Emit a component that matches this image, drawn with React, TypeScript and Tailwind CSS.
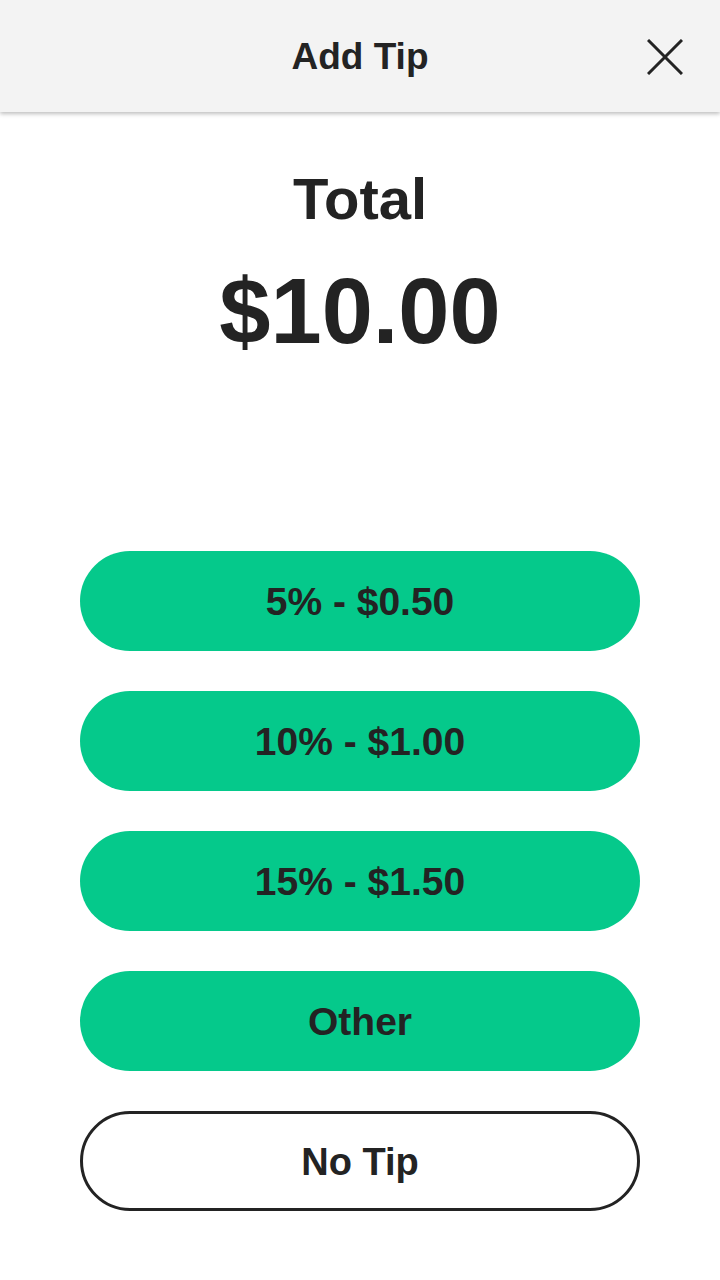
import { useState } from 'react'

const tips = [
  { pct: 5, amount: '$0.50' },
  { pct: 10, amount: '$1.00' },
  { pct: 15, amount: '$1.50' },
]

export default function App() {
  const [selected, setSelected] = useState<string | null>(null)

  return (
    <div
      className="min-h-[1280px] w-[720px] bg-white text-[#232323]"
      style={{ fontFamily: '"Liberation Sans", Arial, sans-serif' }}
    >
      {/* Header */}
      <div className="relative flex h-[112px] items-center justify-center bg-[#f3f3f3] shadow-[0_2px_4px_rgba(0,0,0,0.25)]">
        <h1 className="text-[37px] font-bold leading-none">Add Tip</h1>
        <button className="absolute right-[37px] top-[39px] flex h-[36px] w-[36px] items-center justify-center">
          <svg width="36" height="36" viewBox="0 0 36 36" fill="none" stroke="#232323" strokeWidth="3">
            <path d="M1 1 L35 35 M35 1 L1 35" />
          </svg>
        </button>
      </div>

      {/* Total */}
      <div className="mt-[58px] flex flex-col items-center">
        <div className="text-[58px] font-bold leading-none">Total</div>
        <div className="mt-[37px] text-[92px] font-bold leading-none">$10.00</div>
      </div>

      {/* Tip options */}
      <div className="mt-[194px] flex flex-col gap-[40px] px-[80px]">
        {tips.map((t) => (
          <button
            key={t.pct}
            onClick={() => setSelected(String(t.pct))}
            className="flex h-[100px] items-center justify-center rounded-full bg-[#05c98b] pt-[2px] text-[39px] font-bold"
          >
            {t.pct}% - {t.amount}
          </button>
        ))}
        <button
          onClick={() => setSelected('other')}
          className="flex h-[100px] items-center justify-center rounded-full bg-[#05c98b] pt-[2px] text-[39px] font-bold"
        >
          Other
        </button>
        <button
          onClick={() => setSelected(null)}
          className="flex h-[100px] items-center justify-center rounded-full border-[3px] border-[#232323] bg-white pt-[2px] text-[38px] font-bold"
        >
          No Tip
        </button>
      </div>
      {selected && <span className="hidden">{selected}</span>}
    </div>
  )
}
